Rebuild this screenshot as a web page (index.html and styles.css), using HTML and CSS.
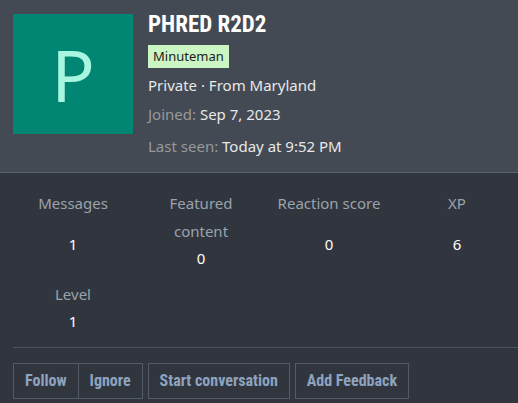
FILE: index.html
```html
<!DOCTYPE html>
<html lang="en">
<head>
  <meta charset="UTF-8">
  <title>PHRED R2D2</title>
  <link rel="stylesheet" href="styles.css">
</head>
<body>
  <div class="profile">
    <!-- Górna część: avatar + dane -->
    <div class="profile-head">
      <div class="avatar">P</div>
      <div class="info">
        <h1 class="username">PHRED R2D2</h1>
        <div><span class="badge">Minuteman</span></div>
        <p class="blurb">Private · From Maryland</p>
        <p class="meta"><span class="muted">Joined:</span> Sep 7, 2023</p>
        <p class="meta seen"><span class="muted">Last seen:</span> Today at 9:52 PM</p>
      </div>
    </div>

    <!-- Statystyki -->
    <div class="profile-body">
      <dl class="stats">
        <div class="stat"><dt>Messages</dt><dd>1</dd></div>
        <div class="stat"><dt>Featured content</dt><dd>0</dd></div>
        <div class="stat"><dt>Reaction score</dt><dd>0</dd></div>
        <div class="stat"><dt>XP</dt><dd>6</dd></div>
        <div class="stat"><dt>Level</dt><dd>1</dd></div>
      </dl>

      <div class="actions">
        <div class="btn-group">
          <a class="btn">Follow</a>
          <a class="btn">Ignore</a>
        </div>
        <a class="btn">Start conversation</a>
        <a class="btn">Add Feedback</a>
      </div>
    </div>
  </div>
</body>
</html>
```

FILE: styles.css
```css
html, body {
  margin: 0;
  padding: 0;
  background-color: #31363e;
  color: #e8e8e8;
  font-family: "Noto Sans", "Open Sans", sans-serif;
  font-size: 15px;
}

/* Nagłówek profilu */
.profile-head {
  display: flex;
  gap: 15px;
  padding: 14px 13px 15px;
  background-color: #434a54;
  border-bottom: 1px solid #59616d;
}
.avatar {
  width: 120px;
  height: 120px;
  flex-shrink: 0;
  background-color: #008673;
  color: #a8f5e0;
  font-size: 72px;
  line-height: 120px;
  text-align: center;
}
.info {
  display: flex;
  flex-direction: column;
}
.username {
  margin: -3px 0 6px;
  font-family: "Roboto Condensed", "Liberation Sans Narrow", "DejaVu Sans Condensed", sans-serif;
  font-stretch: condensed;
  font-weight: bold;
  font-size: 23px;
  line-height: 28px;
  color: #fff;
}
.badge {
  display: inline-block;
  padding: 0 5px;
  background-color: #ccf5c4;
  color: #1d1d1d;
  font-size: 13px;
  line-height: 23px;
}
.blurb, .meta {
  margin: 0;
  line-height: 22px;
}
.blurb {
  margin-top: 6px;
}
.meta {
  margin-top: 7px;
}
.seen {
  margin-top: 10px;
}
.muted {
  color: #999;
}

/* Statystyki */
.stats {
  display: grid;
  grid-template-columns: repeat(4, 128px);
  row-gap: 9px;
  margin: 0;
  padding: 16px 0 0 9px;
}
.stat {
  display: flex;
  flex-direction: column;
  text-align: center;
}
.stat dt {
  color: #9aa2ad;
  line-height: 28px;
  padding: 0 8px;
}
.stat dd {
  flex: 1;
  display: flex;
  align-items: center;
  justify-content: center;
  margin: 0;
  min-height: 26px;
  color: #fff;
}

/* Przyciski */
.actions {
  display: flex;
  gap: 5px;
  margin: 13px 0 0 13px;
  padding-top: 15px;
  border-top: 1px solid #4c535e;
}
.btn-group {
  display: flex;
}
.btn-group .btn + .btn {
  border-left: none;
}
.btn {
  display: block;
  padding: 0 11px;
  height: 34px;
  line-height: 34px;
  border: 1px solid #535b67;
  color: #8ea3bf;
  font-family: "Roboto Condensed", "Liberation Sans Narrow", "DejaVu Sans Condensed", sans-serif;
  font-stretch: condensed;
  font-weight: bold;
  font-size: 16px;
}
```
